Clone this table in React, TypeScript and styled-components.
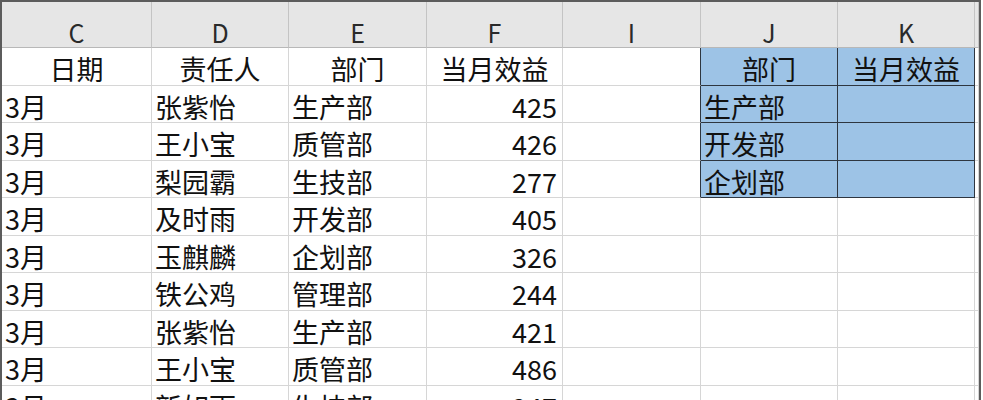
import React from "react";
import styled, { createGlobalStyle } from "styled-components";

const Global = createGlobalStyle`
  html, body { margin: 0; padding: 0; background: #ffffff; }
  body { font-family: "Noto Sans CJK SC", "Noto Sans", sans-serif; }
`;

const COLS = "150px 137px 138px 136px 138px 137px 137px 4px";

const Sheet = styled.div`
  display: flex;
  flex-direction: column;
  width: fit-content;
  border-left: 2px solid #5c5c5c;
  border-top: 2px solid #5c5c5c;
  border-right: 2px solid #5c5c5c;
  height: 398px;
  overflow: hidden;
`;

const Row = styled.div<{ $h: number }>`
  display: grid;
  grid-template-columns: ${COLS};
  height: ${(p) => p.$h}px;
  flex: none;
`;

const HeadCell = styled.div`
  background: #e6e6e6;
  border-right: 1px solid #c4c4c4;
  border-bottom: 1px solid #b8b8b8;
  display: flex;
  align-items: flex-end;
  justify-content: center;
  padding-bottom: 0;
  font-size: 25px;
  line-height: 30px;
  color: #2a2a2a;
  box-sizing: border-box;
`;

const Cell = styled.div<{
  $align?: "left" | "center" | "right";
  $blue?: boolean;
  $darkRight?: boolean;
  $darkBottom?: boolean;
}>`
  box-sizing: border-box;
  display: flex;
  align-items: center;
  justify-content: ${(p) =>
    p.$align === "right" ? "flex-end" : p.$align === "center" ? "center" : "flex-start"};
  padding: 4px ${(p) => (p.$align === "right" ? "5px" : "0")} 0
    ${(p) => (p.$align === "left" || !p.$align ? "3px" : "0")};
  background: ${(p) => (p.$blue ? "#9dc3e6" : "#ffffff")};
  border-right: 1px solid ${(p) => (p.$blue || p.$darkRight ? "#2e3640" : "#d6d6d6")};
  border-bottom: 1px solid ${(p) => (p.$blue || p.$darkBottom ? "#2e3640" : "#d6d6d6")};
  font-size: 27px;
  line-height: 31px;
  color: #111111;
  white-space: nowrap;
`;

const letters = ["C", "D", "E", "F", "I", "J", "K", ""];

const data: [string, string, string, number][] = [
  ["3月", "张紫怡", "生产部", 425],
  ["3月", "王小宝", "质管部", 426],
  ["3月", "梨园霸", "生技部", 277],
  ["3月", "及时雨", "开发部", 405],
  ["3月", "玉麒麟", "企划部", 326],
  ["3月", "铁公鸡", "管理部", 244],
  ["3月", "张紫怡", "生产部", 421],
  ["3月", "王小宝", "质管部", 486],
  ["3月", "新如雨", "生技部", 247],
];

const lookup = ["生产部", "开发部", "企划部"];

const heights = [38, 37, 38, 37, 38, 37, 38, 37, 38, 37];

export default function App() {
  return (
    <>
      <Global />
      <Sheet>
        <Row $h={46}>
          {letters.map((l, i) => (
            <HeadCell key={i}>{l}</HeadCell>
          ))}
        </Row>
        <Row $h={heights[0]}>
          <Cell $align="center">日期</Cell>
          <Cell $align="center">责任人</Cell>
          <Cell $align="center">部门</Cell>
          <Cell $align="center">当月效益</Cell>
          <Cell $darkRight />
          <Cell $align="center" $blue>部门</Cell>
          <Cell $align="center" $blue>当月效益</Cell>
          <Cell />
        </Row>
        {data.map((r, i) => {
          const dept = lookup[i];
          return (
            <Row key={i} $h={heights[i + 1]}>
              <Cell>{r[0]}</Cell>
              <Cell>{r[1]}</Cell>
              <Cell>{r[2]}</Cell>
              <Cell $align="right">{r[3]}</Cell>
              <Cell $darkRight={!!dept} />
              <Cell $blue={!!dept}>{dept ?? ""}</Cell>
              <Cell $blue={!!dept} />
              <Cell />
            </Row>
          );
        })}
      </Sheet>
    </>
  );
}
